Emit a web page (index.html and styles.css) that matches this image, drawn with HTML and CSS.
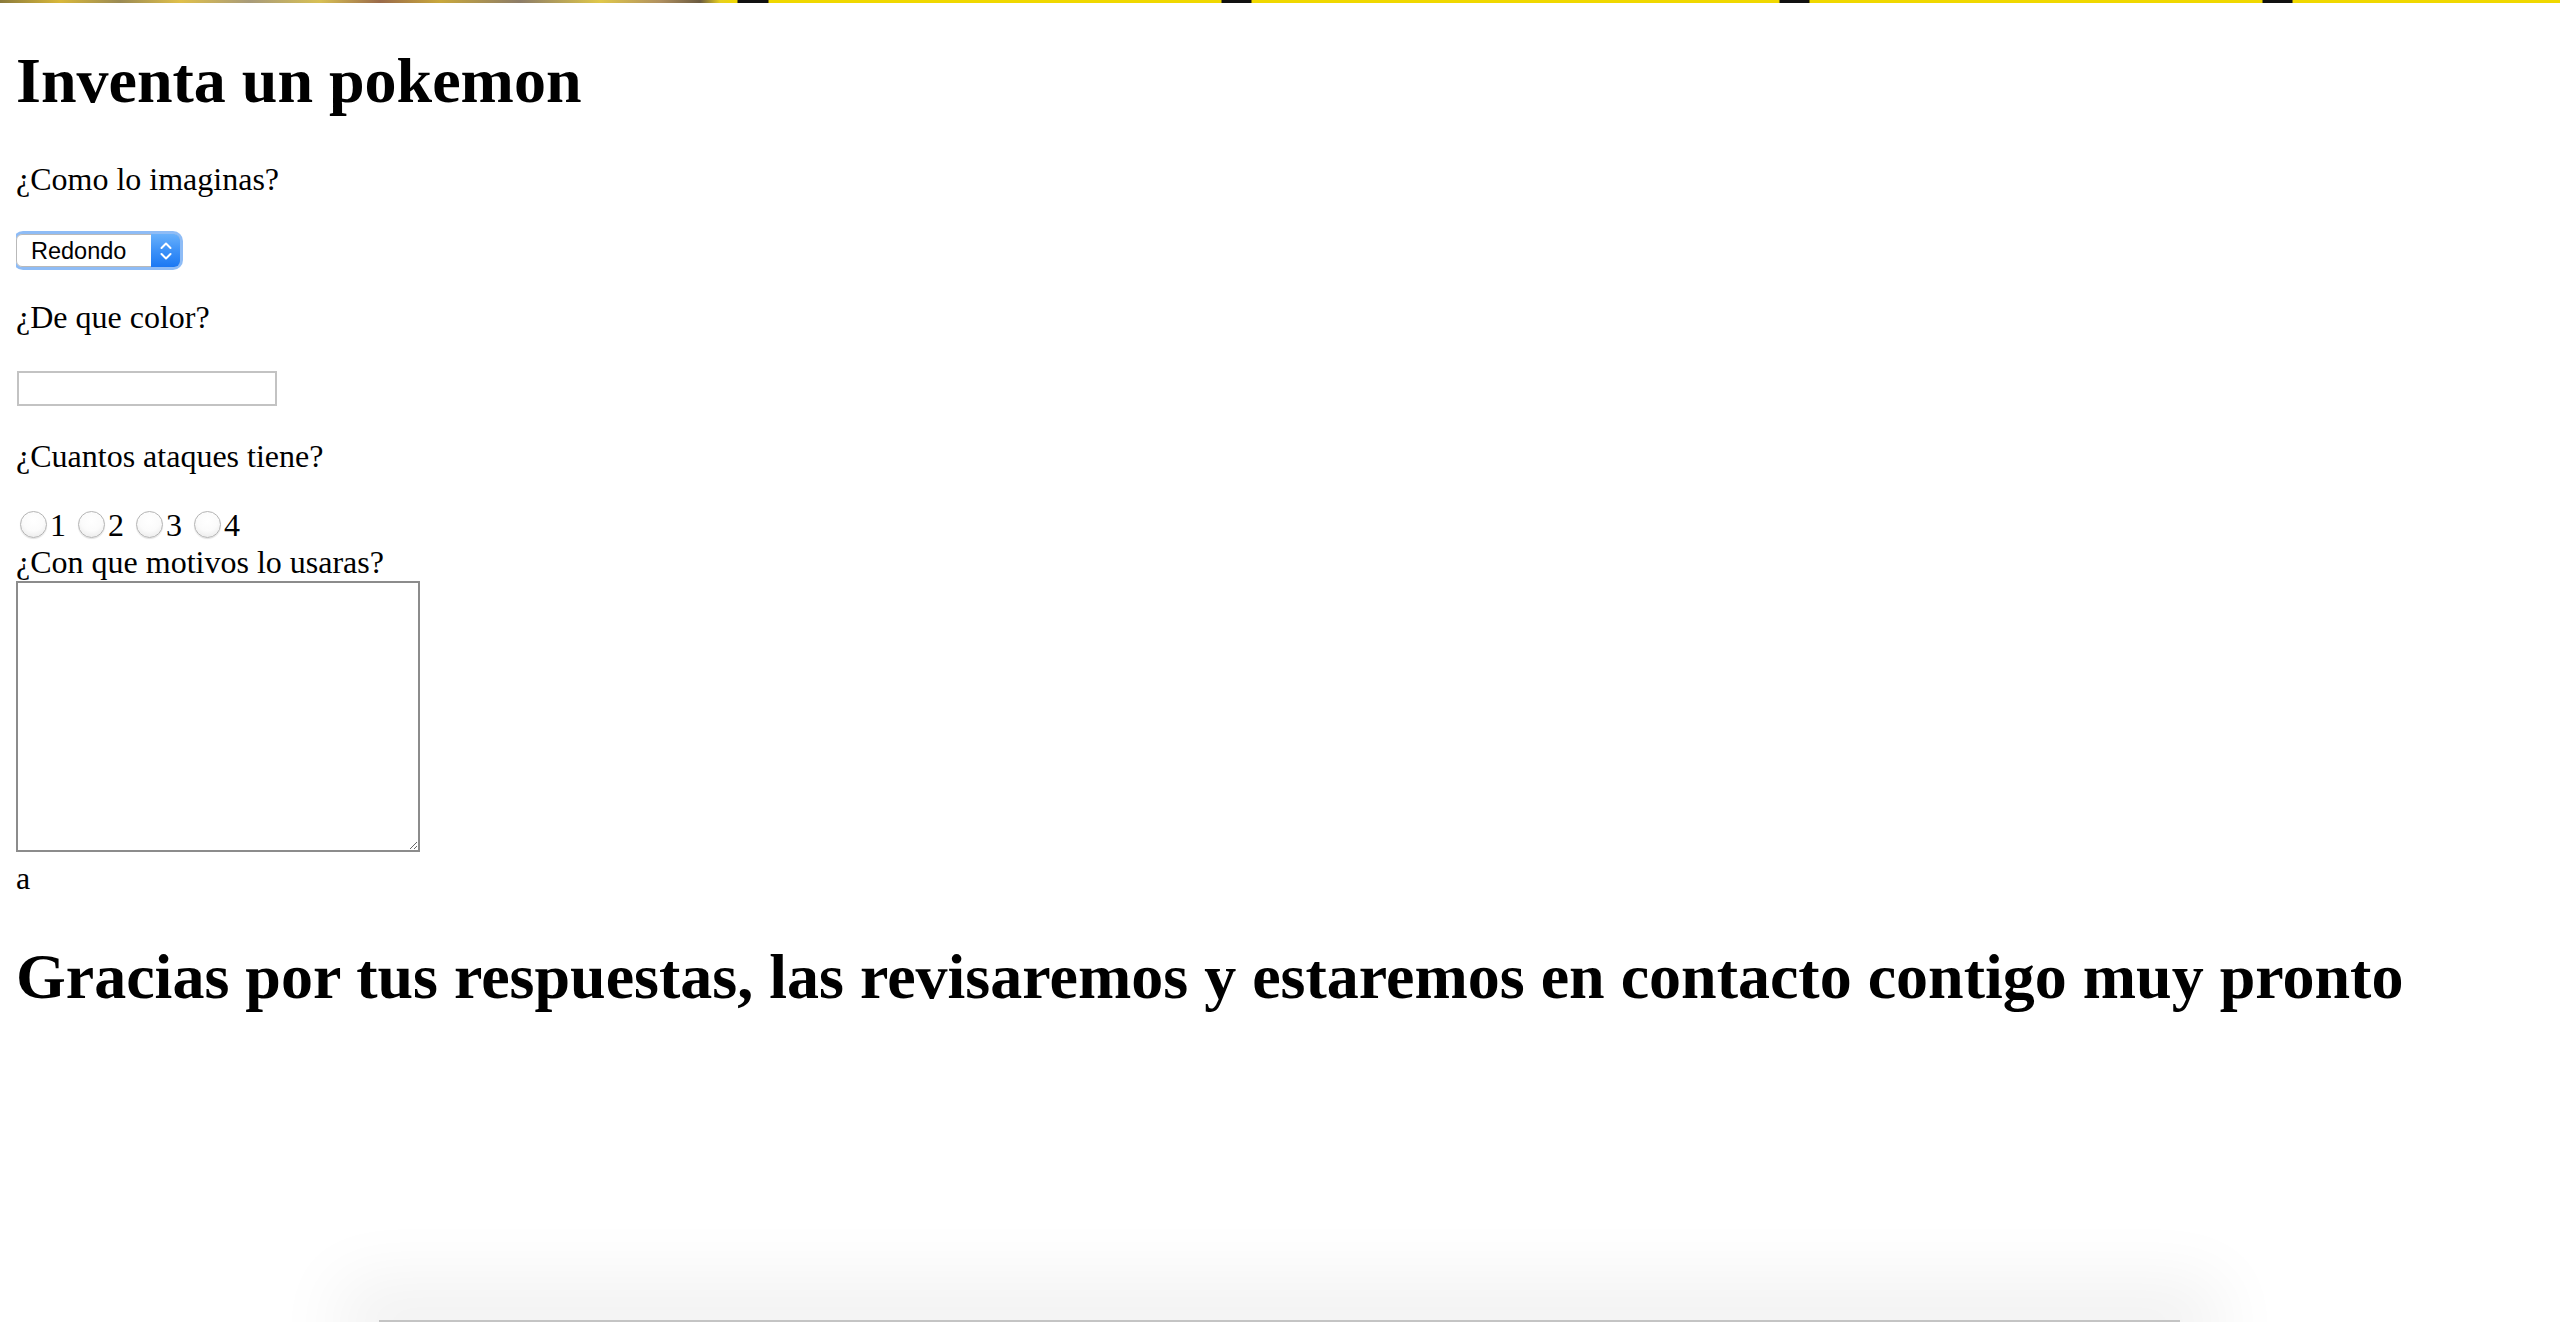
FILE: index.html
```html
<!DOCTYPE html>
<html lang="es">
<head>
<meta charset="utf-8">
<title>Inventa un pokemon</title>
<link rel="stylesheet" href="styles.css">
</head>
<body>
<div class="top-strip"></div>
<h1 class="title title-first">Inventa un pokemon</h1>
<form class="form">
  <p class="question">¿Como lo imaginas?</p>
  <span class="select-wrap"><select class="shape-select"><option>Redondo</option><option>Cuadrado</option><option>Alargado</option></select><span class="select-arrows"><svg width="14" height="24" viewBox="0 0 14 24"><path d="M2.5 9 L7 4.5 L11.5 9" fill="none" stroke="#fff" stroke-width="2" stroke-linecap="round" stroke-linejoin="round"/><path d="M2.5 15 L7 19.5 L11.5 15" fill="none" stroke="#fff" stroke-width="2" stroke-linecap="round" stroke-linejoin="round"/></svg></span></span>
  <p class="question">¿De que color?</p>
  <input class="color-input" type="text">
  <p class="question">¿Cuantos ataques tiene?</p>
  <label class="opt"><input class="radio" type="radio" name="ataques">1</label> <label class="opt"><input class="radio" type="radio" name="ataques">2</label> <label class="opt"><input class="radio" type="radio" name="ataques">3</label> <label class="opt"><input class="radio" type="radio" name="ataques">4</label>
  <br>¿Con que motivos lo usaras?<br>
  <textarea class="motivos"></textarea>
  <br>a
</form>
<h1 class="title">Gracias por tus respuestas, las revisaremos y estaremos en contacto contigo muy pronto</h1>
<div class="dock-shadow"></div>
</body>
</html>
```
FILE: styles.css
```css
html {
  background: #ffffff;
}

body {
  margin: 16px;
  font-family: "Liberation Serif", "Times New Roman", serif;
  font-size: 32px;
  color: #000000;
}

.top-strip {
  position: absolute;
  top: 0;
  left: 0;
  width: 2560px;
  height: 3px;
  background:
    linear-gradient(90deg,
      #8a7a3c 0px, #d9b83a 60px, #9a8a54 120px, #e0c04a 180px, #a89b7a 250px,
      #d8c054 320px, #9a6a4a 380px, #c9a83c 440px, #8c7c68 520px, #e0c84a 600px,
      #b09060 660px, #6a5a40 700px, #e8d020 720px, #f0d800 737px,
      #111111 738px, #111111 768px, #f0d800 769px,
      #f0d800 1221px, #111111 1222px, #111111 1251px, #f0d800 1252px,
      #f0d800 1779px, #111111 1780px, #111111 1809px, #f0d800 1810px,
      #f0d800 2262px, #111111 2263px, #111111 2292px, #f0d800 2293px, #f0d800 2560px);
}

.title {
  font-size: 64px;
  font-weight: bold;
  margin: 42.88px 0;
}

.title-first {
  margin-top: 28px;
}

.form {
  margin: 0;
}

.question {
  margin: 32px 0;
}

.select-wrap {
  position: relative;
  display: inline-block;
  vertical-align: baseline;
  margin-left: 0;
  border-radius: 7px;
  box-shadow: 0 0 0 3px rgba(122, 176, 245, 0.85);
}

.shape-select {
  appearance: none;
  -webkit-appearance: none;
  display: block;
  margin: 0;
  width: 164px;
  height: 33px;
  padding: 0 0 0 14px;
  border: 1px solid #b9b9b9;
  border-radius: 6px;
  background: #ffffff;
  font-family: "Liberation Sans", Arial, sans-serif;
  font-size: 23.5px;
  color: #000000;
  outline: none;
}

.select-arrows {
  position: absolute;
  top: 0;
  right: 0;
  width: 29px;
  height: 33px;
  border-radius: 0 6px 6px 0;
  background: linear-gradient(180deg, #69b1fb 0%, #3d92f8 50%, #1b78f3 100%);
  display: flex;
  align-items: center;
  justify-content: center;
}

.color-input {
  margin: 0 0 0 1px;
  width: 260px;
  height: 35px;
  box-sizing: border-box;
  border: 2px solid #c3c3c3;
  padding: 2px 4px;
  font-size: 26px;
  background: #ffffff;
  outline: none;
}

.opt {
  font-size: 32px;
}

.radio {
  appearance: none;
  -webkit-appearance: none;
  width: 27px;
  height: 27px;
  margin: 0 3px 0 4px;
  border-radius: 50%;
  border: 1px solid #b4b4b4;
  background: radial-gradient(circle at 50% 35%, #ffffff 0%, #fbfbfb 50%, #e4e4e4 100%);
  box-shadow: 0 1px 1px rgba(0, 0, 0, 0.12);
  box-sizing: border-box;
  vertical-align: -2px;
}

.motivos {
  margin: 0;
  width: 404px;
  height: 271px;
  box-sizing: border-box;
  border: 2px solid #8c8c8c;
  padding: 4px;
  font-family: "Liberation Mono", monospace;
  font-size: 26px;
  background: #ffffff;
  vertical-align: baseline;
}

.dock-shadow {
  position: absolute;
  left: 379px;
  bottom: 0;
  width: 1801px;
  height: 2px;
  background: #c4c4c4;
  box-shadow: 0 0 70px 40px rgba(0, 0, 0, 0.06);
}
```
